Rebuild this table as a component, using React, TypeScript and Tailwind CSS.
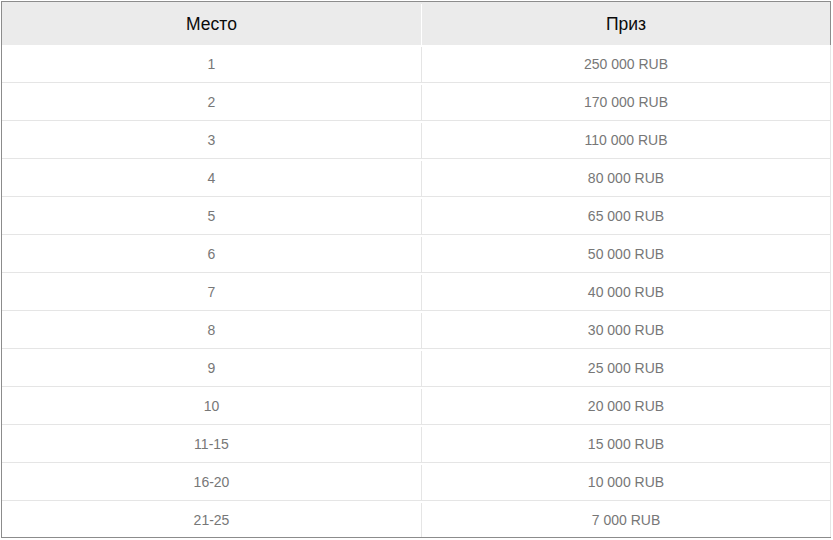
import React from "react";

const rows = [
  ["1", "250 000 RUB"],
  ["2", "170 000 RUB"],
  ["3", "110 000 RUB"],
  ["4", "80 000 RUB"],
  ["5", "65 000 RUB"],
  ["6", "50 000 RUB"],
  ["7", "40 000 RUB"],
  ["8", "30 000 RUB"],
  ["9", "25 000 RUB"],
  ["10", "20 000 RUB"],
  ["11-15", "15 000 RUB"],
  ["16-20", "10 000 RUB"],
  ["21-25", "7 000 RUB"],
];

export default function App() {
  return (
    <div className="h-[540px] w-[833px] bg-white pl-px pt-px font-['Liberation_Sans',Arial,sans-serif]">
      <div className="w-[830px] border-y border-l border-[#8c8c8c]">
        {/* шапка таблицы */}
        <div className="grid h-[43px] grid-cols-[420px_1fr] border-r border-[#8c8c8c] bg-[#ebebeb] pt-[2px] text-[17.5px] text-[#0a0a0a]">
          <div className="flex items-center justify-center border-r border-white">Место</div>
          <div className="flex items-center justify-center">Приз</div>
        </div>
        {rows.map(([place, prize], i) => (
          <div
            key={place}
            className={`grid grid-cols-[420px_1fr] border-r border-[#e5e5e5] pt-[2px] text-[14px] text-[#777] ${
              i < rows.length - 1 ? "h-[38px] border-b" : "h-[36px]"
            }`}
          >
            <div className="flex items-center justify-center border-r border-[#e5e5e5]">{place}</div>
            <div className="flex items-center justify-center">{prize}</div>
          </div>
        ))}
      </div>
    </div>
  );
}
